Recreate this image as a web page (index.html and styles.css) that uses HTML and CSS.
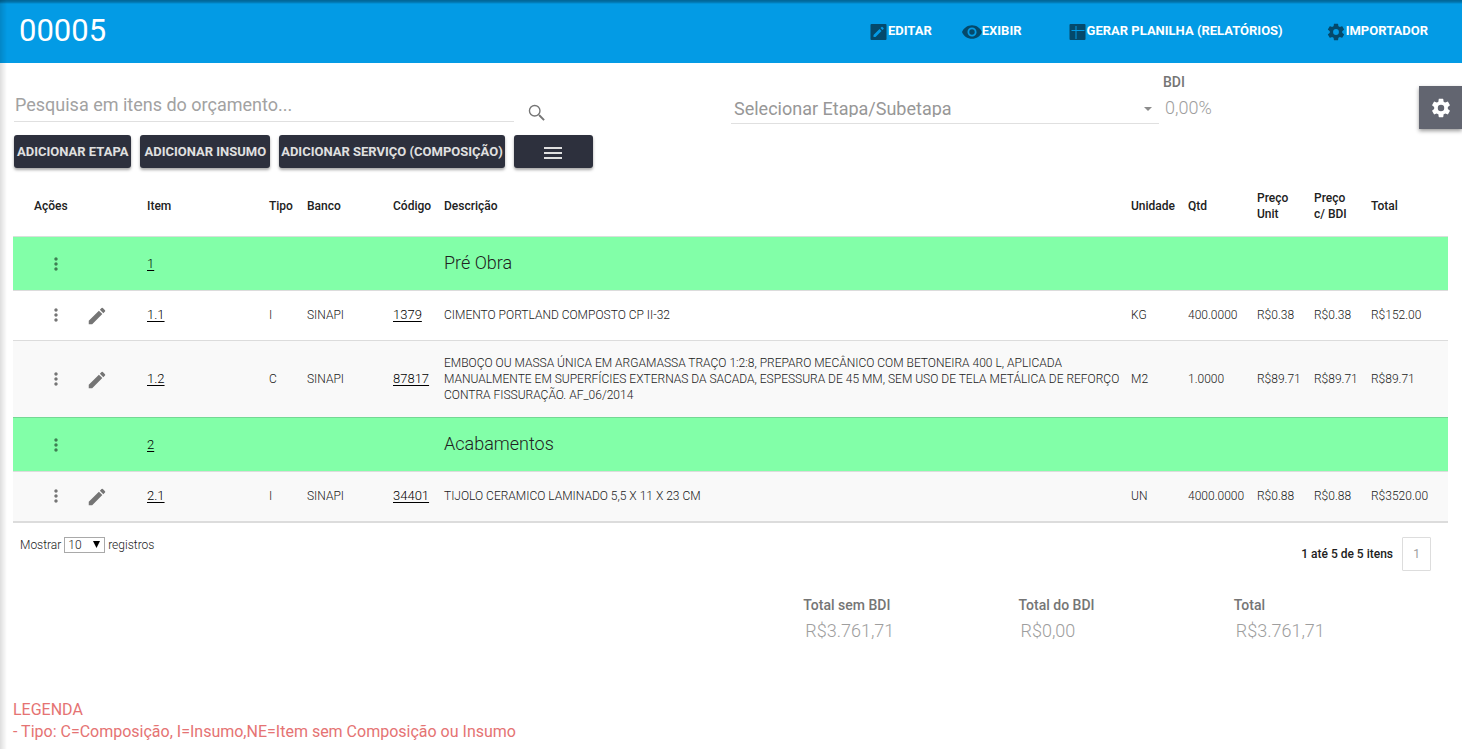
FILE: index.html
```html
<!DOCTYPE html>
<html lang="pt-BR">
<head>
<meta charset="utf-8">
<meta name="viewport" content="width=device-width, initial-scale=1">
<title>Orçamento 00005</title>
<link rel="stylesheet" href="styles.css">
</head>
<body>
<svg class="sprite" aria-hidden="true">
  <symbol id="more" viewBox="0 0 24 24"><path d="M12 8c1.100 0 2-.9 2-2s-.9-2-2-2-2 .9-2 2 .9 2 2 2zm0 2c-1.100 0-2 .9-2 2s.9 2 2 2 2-.9 2-2-.9-2-2-2zm0 6c-1.100 0-2 .9-2 2s.9 2 2 2 2-.9 2-2-.9-2-2-2z"/></symbol>
  <symbol id="pencil" viewBox="0 0 24 24"><path d="M3 17.250V21h3.750L17.810 9.940l-3.750-3.750L3 17.250zM20.710 7.040a1 1 0 0 0 0-1.410l-2.340-2.340a1 1 0 0 0-1.410 0l-1.830 1.830 3.750 3.750 1.830-1.830z"/></symbol>
  <symbol id="gear" viewBox="0 0 24 24"><path d="M12 15.500A3.500 3.500 0 0 1 8.500 12 3.500 3.500 0 0 1 12 8.500a3.500 3.500 0 0 1 3.500 3.500 3.500 3.500 0 0 1-3.500 3.500m7.430-2.530c.04-.32.07-.64.07-.97s-.03-.66-.07-1l2.110-1.630c.19-.15.24-.42.12-.64l-2-3.460c-.12-.22-.39-.31-.61-.22l-2.490 1c-.52-.39-1.060-.73-1.690-.98l-.37-2.650A.506.506 0 0 0 14 2h-4c-.25 0-.46.18-.5.420l-.37 2.650c-.63.25-1.170.59-1.690.98l-2.490-1c-.22-.09-.49 0-.61.220l-2 3.460c-.13.220-.07.490.12.640L4.570 11c-.04.340-.07.670-.07 1s.03.650.07.970l-2.110 1.660c-.19.150-.25.420-.12.640l2 3.460c.12.220.39.300.61.220l2.490-1.010c.52.400 1.060.740 1.690.990l.37 2.650c.04.240.25.420.5.420h4c.25 0 .46-.18.5-.42l.37-2.650c.63-.26 1.170-.59 1.690-.99l2.490 1.010c.22.080.49 0 .61-.22l2-3.460c.12-.22.07-.49-.12-.64l-2.110-1.660z"/></symbol>
</svg>

<header class="topbar">
  <h1 class="title">00005</h1>
  <nav class="nav">
    <button class="nav-button" type="button"><svg class="nav-icon" viewBox="0 0 18 18"><path fill-rule="evenodd" d="M2 1h14q1 0 1 1v14q0 1-1 1H2q-1 0-1-1V2q0-1 1-1zM4 12v2h2l6-6-2-2zM11 5l2 2 1-1q.5-.5 0-1l-1-1q-.5-.5-1 0z"/></svg>Editar</button>
    <button class="nav-button" type="button"><svg class="nav-icon eye" viewBox="1 3 22 18"><path d="M12 4.500C7 4.500 2.730 7.610 1 12c1.730 4.390 6 7.500 11 7.500s9.270-3.110 11-7.500c-1.730-4.390-6-7.500-11-7.500zM12 17c-2.760 0-5-2.240-5-5s2.240-5 5-5 5 2.240 5 5-2.240 5-5 5zm0-8a3 3 0 1 0 0 6 3 3 0 0 0 0-6z"/></svg>Exibir</button>
    <button class="nav-button" type="button"><svg class="nav-icon" viewBox="0 0 18 18"><path fill-rule="evenodd" d="M2 1h14q1 0 1 1v14q0 1-1 1H2q-1 0-1-1V2q0-1 1-1zM7 3v4H3v1h4v8h1V8h8V7H8V3z"/></svg>Gerar planilha (Relatórios)</button>
    <button class="nav-button" type="button"><svg class="nav-icon wide"><use href="#gear"/></svg>Importador</button>
  </nav>
</header>

<main class="page">
  <section class="filters">
    <div class="search">
      <input class="search-input" type="text" placeholder="Pesquisa em itens do orçamento..." aria-label="Pesquisa em itens do orçamento">
      <button class="icon-button" type="button" aria-label="Pesquisar"><svg class="icon large" viewBox="0 0 24 24"><path d="M15.500 14h-.79l-.28-.27A6.470 6.470 0 0 0 16 9.500 6.500 6.500 0 1 0 9.500 16c1.610 0 3.090-.59 4.230-1.570l.27.280v.79l5 4.990L20.490 19l-4.990-5zm-6 .5a5 5 0 1 1 0-10 5 5 0 0 1 0 10z"/></svg></button>
    </div>
    <div class="stage">
      <select class="stage-select" aria-label="Etapa/Subetapa"><option>Selecionar Etapa/Subetapa</option></select>
      <svg class="caret" viewBox="0 0 8 4"><path d="M0 0h8L4 4z"/></svg>
    </div>
    <div class="bdi">
      <label class="label" for="bdi">BDI</label>
      <input class="value" id="bdi" type="text" value="0,00%" disabled>
    </div>
    <button class="settings" type="button" aria-label="Configurações"><svg class="settings-icon"><use href="#gear"/></svg></button>
  </section>

  <div class="actions">
    <button class="action" type="button">Adicionar etapa</button>
    <button class="action roomy" type="button">Adicionar insumo</button>
    <button class="action compact" type="button">Adicionar serviço (composição)</button>
    <button class="action menu" type="button" aria-label="Menu"><svg class="menu-icon" viewBox="0 0 18 12"><path d="M0 0h18v2H0zM0 5h18v2H0zM0 10h18v2H0z"/></svg></button>
  </div>

  <table class="items">
    <colgroup><col class="c-actions"><col class="c-item"><col class="c-type"><col class="c-bank"><col class="c-code"><col><col class="c-price"><col class="c-qty"><col class="c-price"><col class="c-price"><col class="c-total"></colgroup>
    <thead>
      <tr><th class="first">Ações</th><th>Item</th><th>Tipo</th><th>Banco</th><th>Código</th><th>Descrição</th><th>Unidade</th><th>Qtd</th><th>Preço Unit</th><th>Preço c/&nbsp;BDI</th><th>Total</th></tr>
    </thead>
    <tbody>
      <tr class="group">
        <td><div class="tools"><button class="icon-button" type="button" aria-label="Opções"><svg class="icon"><use href="#more"/></svg></button></div></td>
        <td><a class="link" href="#">1</a></td><td></td><td></td><td></td><td class="group-name">Pré Obra</td><td></td><td></td><td></td><td></td><td></td>
      </tr>
      <tr>
        <td><div class="tools"><button class="icon-button" type="button" aria-label="Opções"><svg class="icon"><use href="#more"/></svg></button><button class="icon-button" type="button" aria-label="Editar"><svg class="icon large"><use href="#pencil"/></svg></button></div></td>
        <td><a class="link" href="#">1.1</a></td><td>I</td><td>SINAPI</td><td><a class="link" href="#">1379</a></td><td class="description">CIMENTO PORTLAND COMPOSTO CP II-32</td><td>KG</td><td>400.0000</td><td>R$0.38</td><td>R$0.38</td><td>R$152.00</td>
      </tr>
      <tr class="shaded">
        <td><div class="tools"><button class="icon-button" type="button" aria-label="Opções"><svg class="icon"><use href="#more"/></svg></button><button class="icon-button" type="button" aria-label="Editar"><svg class="icon large"><use href="#pencil"/></svg></button></div></td>
        <td><a class="link" href="#">1.2</a></td><td>C</td><td>SINAPI</td><td><a class="link" href="#">87817</a></td><td class="description">EMBOÇO OU MASSA ÚNICA EM ARGAMASSA TRAÇO 1:2:8, PREPARO MECÂNICO COM BETONEIRA 400 L, APLICADA MANUALMENTE EM SUPERFÍCIES EXTERNAS DA SACADA, ESPESSURA DE 45 MM, SEM USO DE TELA METÁLICA DE REFORÇO CONTRA FISSURAÇÃO. AF_06/2014</td><td>M2</td><td>1.0000</td><td>R$89.71</td><td>R$89.71</td><td>R$89.71</td>
      </tr>
      <tr class="group">
        <td><div class="tools"><button class="icon-button" type="button" aria-label="Opções"><svg class="icon"><use href="#more"/></svg></button></div></td>
        <td><a class="link" href="#">2</a></td><td></td><td></td><td></td><td class="group-name">Acabamentos</td><td></td><td></td><td></td><td></td><td></td>
      </tr>
      <tr class="shaded">
        <td><div class="tools"><button class="icon-button" type="button" aria-label="Opções"><svg class="icon"><use href="#more"/></svg></button><button class="icon-button" type="button" aria-label="Editar"><svg class="icon large"><use href="#pencil"/></svg></button></div></td>
        <td><a class="link" href="#">2.1</a></td><td>I</td><td>SINAPI</td><td><a class="link" href="#">34401</a></td><td class="description">TIJOLO CERAMICO LAMINADO 5,5 X 11 X 23 CM</td><td>UN</td><td>4000.0000</td><td>R$0.88</td><td>R$0.88</td><td>R$3520.00</td>
      </tr>
    </tbody>
  </table>

  <div class="table-footer">
    <label class="length">Mostrar
      <span class="length-box"><select class="length-select"><option>10</option></select><svg class="length-caret" viewBox="0 0 7 7"><path d="M0 0h7L3.500 7z"/></svg></span>
      registros</label>
    <div class="pager"><strong class="info">1 até 5 de 5 itens</strong><button class="page-number" type="button">1</button></div>
  </div>

  <section class="totals">
    <div class="total"><label class="label" for="t1">Total sem BDI</label><input class="value" id="t1" type="text" value="R$3.761,71" disabled></div>
    <div class="total"><label class="label" for="t2">Total do BDI</label><input class="value" id="t2" type="text" value="R$0,00" disabled></div>
    <div class="total"><label class="label" for="t3">Total</label><input class="value" id="t3" type="text" value="R$3.761,71" disabled></div>
  </section>

  <p class="legend">LEGENDA<br>- Tipo: C=Composição, I=Insumo,NE=Item sem Composição ou Insumo</p>
</main>
</body>
</html>
```

FILE: styles.css
```css
* { box-sizing: border-box; }

body {
  margin: 0;
  background: #fff;
  color: #212121;
  font-family: Roboto, "Liberation Sans", sans-serif;
  font-size: 12px;
  line-height: 16px;
}

/* soft edge cast by the side menu and the bar above */
body::before {
  content: "";
  position: fixed;
  inset: 0;
  z-index: 2;
  pointer-events: none;
  background:
    linear-gradient(to bottom, rgba(0, 0, 0, .35), rgba(0, 0, 0, .25) 2px, transparent 4px),
    linear-gradient(to right, rgba(0, 0, 0, .13), transparent 7px);
}

button, input, select {
  margin: 0;
  padding: 0;
  border: 0;
  background: none;
  color: inherit;
  font: inherit;
}

button { cursor: pointer; }
svg { display: block; fill: currentColor; flex: none; }
.sprite { display: none; }

.topbar {
  display: flex;
  align-items: center;
  justify-content: space-between;
  height: 63px;
  padding: 0 34px 2px 19px;
  background: #039be5;
  color: #fff;
}

.title { margin: 0; font-size: 31px; font-weight: 400; line-height: 60px; }
.nav { display: flex; gap: 30px; }
.nav-button {
  display: flex;
  align-items: center;
  font-size: 13px;
  font-weight: 700;
  text-transform: uppercase;
}
.nav-button:nth-child(3) { margin-left: 16px; }
.nav-button:nth-child(4) { margin-left: 13px; }
.nav-icon { width: 19px; height: 18px; margin-top: 2px; color: #04496b; }
.nav-icon.eye, .nav-icon.wide { width: 20px; height: 20px; }

.page { padding: 0 14px 0 13px; }

.filters { display: flex; align-items: flex-start; height: 72px; margin-right: -14px; }
.search { display: flex; flex: 0 0 535px; padding: 26px 0 0 1px; }
.search-input {
  width: 500px;
  height: 33px;
  padding: 0 1px 2px;
  border-bottom: 1px solid #e0e0e0;
  font-size: 18px;
}
.search-input::placeholder { color: #a2a2a2; opacity: 1; }
.search .icon-button { margin: 13px 0 0 12px; }
.icon-button { width: 20px; height: 20px; color: #757575; }
.icon { width: 20px; height: 20px; }
.icon.large { width: 22px; height: 22px; }

.stage { position: relative; flex: 1 1 auto; max-width: 428px; margin: 28px 0 0 auto; }
.stage-select {
  width: 100%;
  height: 33px;
  padding: 3px 24px 0 3px;
  border-bottom: 1px solid #e0e0e0;
  appearance: none;
  color: #979797;
  font-size: 18px;
}
.caret { position: absolute; right: 7px; top: 16px; width: 8px; height: 4px; color: #8c8c8c; pointer-events: none; }

.bdi { flex: 0 0 256px; padding: 11px 0 0 4px; }
.label { display: block; color: #757575; font-size: 14px; font-weight: 500; }
.value { display: block; width: 160px; height: 28px; margin-top: 3px; padding: 0 2px; color: #9e9e9e; font-size: 18px; font-weight: 300; }

.settings {
  display: grid;
  place-items: center;
  width: 43px;
  height: 43px;
  margin: 23px 0 0 4px;
  background: #626570;
  color: #fff;
  box-shadow: 0 2px 4px rgba(0, 0, 0, .4);
}
.settings-icon { width: 22px; height: 22px; }

.actions { display: flex; gap: 9px; padding-left: 1px; }
.action {
  height: 33px;
  padding: 0 3px;
  border-radius: 3px;
  background: #2d303d;
  color: #e0e0e0;
  font-size: 13px;
  font-weight: 700;
  text-transform: uppercase;
  white-space: nowrap;
  box-shadow: 0 2px 3px rgba(0, 0, 0, .35);
}
.action.roomy { padding: 0 4px; }
.action.compact { padding: 0 2px; }
.menu { display: grid; place-items: center; width: 79px; }
.menu-icon { width: 18px; height: 12px; margin-top: 3px; }

.items {
  width: 100%;
  margin-top: 8px;
  border-collapse: separate;
  border-spacing: 0;
  border-bottom: 2px solid #dcdcdc;
  table-layout: fixed;
  font-weight: 300;
}
.c-actions { width: 127px; }
.c-item { width: 122px; }
.c-type { width: 38px; }
.c-bank { width: 86px; }
.c-code { width: 51px; }
.c-price { width: 57px; }
.c-qty { width: 69px; }
.c-total { width: 84px; }

th, td { padding: 0 7px; text-align: left; vertical-align: middle; }
th { height: 60px; font-weight: 500; }
.first { padding-left: 21px; }
td { height: 50px; padding-bottom: 2px; border-top: 1px solid #dcdcdc; }
.shaded td { padding-top: 14px; padding-bottom: 14px; background: #f9f9f9; }
.shaded:last-child td { padding-top: 0; padding-bottom: 2px; }
td.description { padding-right: 0; }
.group td { height: 54px; padding-bottom: 0; background: #82ffa8; border-top-color: #d8e0da; }
.shaded + .group td { border-top-color: #74d894; }
.group .group-name { padding-bottom: 2px; font-size: 18px; line-height: 24px; }

.tools { display: flex; align-items: center; gap: 20px; padding-left: 26px; }
.link { color: #000; font-size: 13px; text-underline-offset: 2px; }
.group .icon-button { color: #3f7f53; }

.table-footer { display: flex; justify-content: space-between; align-items: flex-start; padding: 14px 17px 0 7px; }
.length { font-weight: 300; }
.length-box { position: relative; display: inline-block; vertical-align: top; }
.length-select {
  display: block;
  width: 41px;
  height: 16px;
  padding: 0 0 0 3px;
  border: 1px solid #a9a9a9;
  appearance: none;
  line-height: 14px;
}
.length-caret { position: absolute; right: 5px; top: 4px; width: 7px; height: 7px; color: #000; pointer-events: none; }
.pager { display: flex; align-items: center; gap: 9px; }
.info { font-weight: 500; }
.page-number { width: 29px; height: 34px; border: 1px solid #ddd; border-radius: 1px; color: #9e9e9e; }

.totals { display: grid; grid-template-columns: repeat(3, 15%); justify-content: end; padding-top: 26px; }
.total { padding-left: 1px; }

.legend { margin: 55px 0 0; color: #e57373; font-size: 16px; line-height: 22px; }
```
